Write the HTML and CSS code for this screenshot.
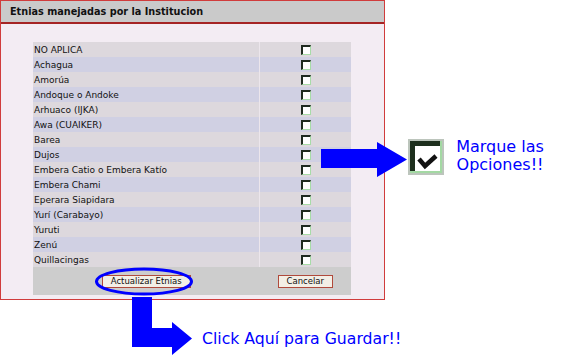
FILE: index.html
```html
<!DOCTYPE html>
<html lang="es">
<head>
<meta charset="UTF-8">
<title>Etnias manejadas por la Institucion</title>
<link rel="stylesheet" href="styles.css">
</head>
<body>
<div class="stage">
  <div class="panel">
    <div class="panel-title">Etnias manejadas por la Institucion</div>
    <div class="panel-body">
      <table class="etnias">
        <tr><td>NO APLICA</td><td class="chk"><input type="checkbox"></td></tr>
        <tr><td>Achagua</td><td class="chk"><input type="checkbox"></td></tr>
        <tr><td>Amorúa</td><td class="chk"><input type="checkbox"></td></tr>
        <tr><td>Andoque o Andoke</td><td class="chk"><input type="checkbox"></td></tr>
        <tr><td>Arhuaco (IJKA)</td><td class="chk"><input type="checkbox"></td></tr>
        <tr><td>Awa (CUAIKER)</td><td class="chk"><input type="checkbox"></td></tr>
        <tr><td>Barea</td><td class="chk"><input type="checkbox"></td></tr>
        <tr><td>Dujos</td><td class="chk"><input type="checkbox"></td></tr>
        <tr><td>Embera Catio o Embera Katío</td><td class="chk"><input type="checkbox"></td></tr>
        <tr><td>Embera Chami</td><td class="chk"><input type="checkbox"></td></tr>
        <tr><td>Eperara Siapidara</td><td class="chk"><input type="checkbox"></td></tr>
        <tr><td>Yurí (Carabayo)</td><td class="chk"><input type="checkbox"></td></tr>
        <tr><td>Yuruti</td><td class="chk"><input type="checkbox"></td></tr>
        <tr><td>Zenú</td><td class="chk"><input type="checkbox"></td></tr>
        <tr><td>Quillacingas</td><td class="chk"><input type="checkbox"></td></tr>
        <tr class="actions">
          <td><button class="btn">Actualizar Etnias</button></td>
          <td><button class="btn">Cancelar</button></td>
        </tr>
      </table>
    </div>
  </div>

  <!-- notas del tutorial encima de la captura -->
  <svg class="marks" width="562" height="362" viewBox="0 0 562 362">
    <ellipse cx="144" cy="281.5" rx="47.5" ry="12.5" fill="none" stroke="#0000ff" stroke-width="3"/>
    <polygon fill="#0000ff" points="321,149 377,149 377,142 407,159.5 377,177 377,168 321,168"/>
    <polygon fill="#0000ff" points="132,297 152,297 152,328 172,328 172,322 192,338.5 172,355 172,347 132,347"/>
    <g transform="translate(408 139)">
      <rect x="0" y="0" width="36" height="36" fill="#bcc5bc"/>
      <rect x="2" y="2" width="32" height="32" fill="#a3d9a3"/>
      <rect x="2" y="2" width="30" height="30" fill="#1d2f1d"/>
      <rect x="7" y="7" width="25" height="25" fill="#fff"/>
      <path d="M11 20 L17 27 L28 17" fill="none" stroke="#111" stroke-width="4.5" stroke-linejoin="miter"/>
    </g>
  </svg>
  <div class="note note-check">Marque las<br>Opciones!!</div>
  <div class="note note-save">Click Aquí para Guardar!!</div>
</div>
</body>
</html>
```

FILE: styles.css
```css
body {
  margin: 0;
  background-color: #fff;
  font-family: "DejaVu Sans", Verdana, sans-serif;
}

.stage {
  position: relative;
  width: 562px;
  height: 362px;
  overflow: hidden;
}

.panel {
  box-sizing: border-box;
  width: 385px;
  height: 300px;
  border: 1px solid #d03c3c;
  background-color: #f3ecf3;
}

.panel-title {
  height: 21px;
  line-height: 21px;
  padding-left: 9px;
  background-color: #cacaca;
  border-bottom: 2px solid #a52424;
  font-size: 9.7px;
  font-weight: bold;
  color: #111;
}

.panel-body {
  padding: 18px 0 0 32px;
}

.etnias {
  width: 318px;
  border-collapse: collapse;
  border-spacing: 0;
}

.etnias td {
  height: 15px;
  padding: 0 1px;
  font-size: 9px;
  color: #111;
  white-space: nowrap;
}

.etnias td:first-child {
  width: 224px;
}

.etnias tr:nth-child(odd) td {
  background-color: #ddd8dd;
}

.etnias tr:nth-child(even) td {
  background-color: #d0d0e3;
}

.etnias td.chk {
  border-left: 1px solid #ece6ec;
  text-align: center;
  padding: 0;
}

.chk input {
  appearance: none;
  -webkit-appearance: none;
  box-sizing: border-box;
  display: block;
  width: 10px;
  height: 10px;
  margin: 0 auto;
  background-color: #fff;
  border-top: 2px solid #1f2a1f;
  border-left: 2px solid #1f2a1f;
  border-right: 1px solid #a8dca8;
  border-bottom: 1px solid #a8dca8;
}

.etnias tr.actions td {
  height: 28px;
  background-color: #cdcdcd;
  text-align: center;
  border-left: none;
}

.btn {
  font-family: "DejaVu Sans", Verdana, sans-serif;
  font-size: 8.5px;
  line-height: 11px;
  padding: 0 8px;
  margin: 0;
  color: #111;
  background-color: #f3efe6;
  border: 1px solid #b04a3c;
  border-radius: 0;
}

.marks {
  position: absolute;
  top: 0;
  left: 0;
}

.note {
  position: absolute;
  color: #0000ff;
  font-size: 16px;
  line-height: 18px;
  white-space: nowrap;
}

.note-check {
  left: 450px;
  top: 138px;
  width: 100px;
  text-align: center;
}

.note-save {
  left: 202px;
  top: 330px;
  font-size: 15.7px;
}
```
